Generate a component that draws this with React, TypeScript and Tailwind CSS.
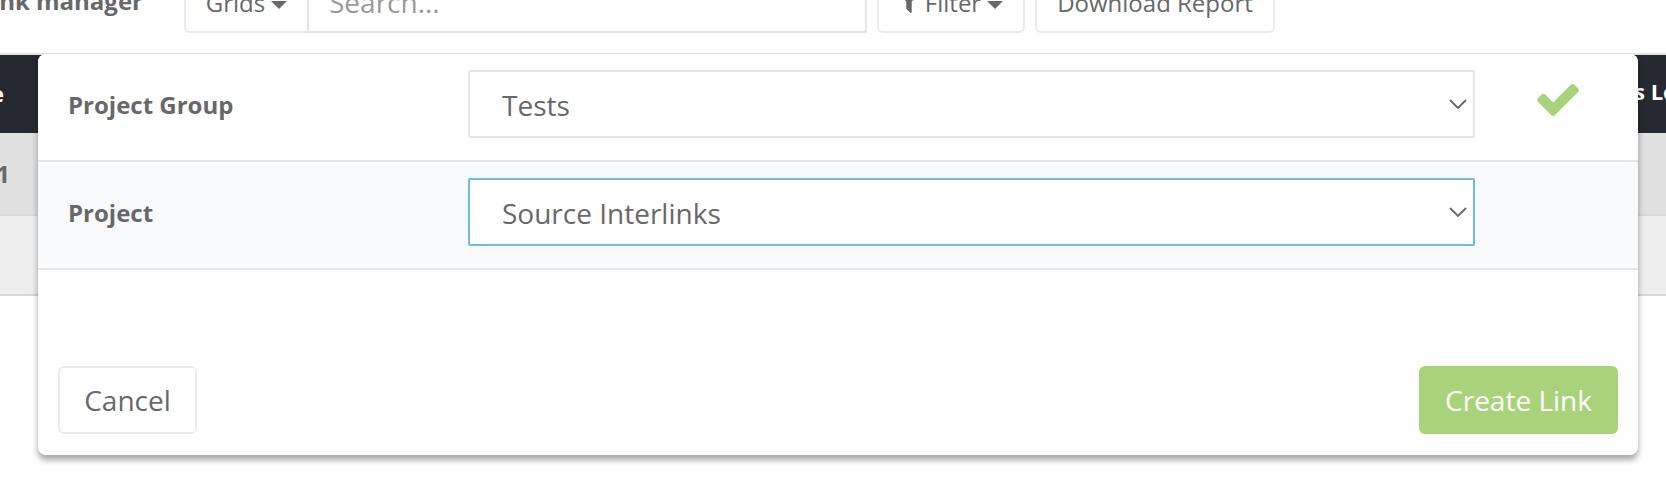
import React, { useState } from 'react';

const CheckIcon: React.FC = () => (
  <svg viewBox="121 334 1550 1188" className="h-8 w-[42px] fill-[#a9d37a]" aria-label="Valid">
    <path d="M1671 566q0 40-28 68l-724 724-136 136q-28 28-68 28t-68-28l-136-136-362-362q-28-28-28-68t28-68l136-136q28-28 68-28t68 28l294 295 656-657q28-28 68-28t68 28l136 136q28 28 28 68z" />
  </svg>
);

const Caret: React.FC = () => (
  <svg viewBox="0 0 16 8" className="mt-1 h-2 w-4 shrink-0 fill-current" aria-hidden="true">
    <path d="M0 0h16l-8 8z" />
  </svg>
);

const FilterIcon: React.FC = () => (
  <svg viewBox="187 256 1418 1408" className="h-5 w-5 shrink-0 fill-current" aria-hidden="true">
    <path d="M1595 295q17 41-14 70l-493 493v742q0 42-39 59-13 5-25 5-27 0-45-19l-256-256q-19-19-19-45v-486l-493-493q-31-29-14-70 17-39 59-39h1280q42 0 59 39z" />
  </svg>
);

interface SelectRowProps {
  id: string;
  label: string;
  options: string[];
  value: string;
  onChange: (value: string) => void;
  active?: boolean;
  valid?: boolean;
}

const SelectRow: React.FC<SelectRowProps> = ({ id, label, options, value, onChange, active, valid }) => (
  <div
    className={`grid grid-cols-[430fr_1007fr_163fr] border-b-2 border-[#e3e4e5] pt-4 pb-[22px] ${
      active ? 'bg-[#f9fafc]' : 'bg-white'
    }`}
  >
    <label htmlFor={id} className="self-center pt-0.5 pl-[30px] text-2xl font-bold">
      {label}
    </label>
    <div className="relative">
      <select
        id={id}
        value={value}
        onChange={(e) => onChange(e.target.value)}
        className={`h-[68px] w-full appearance-none rounded-xs border-2 bg-white pt-0.5 pl-8 text-[28px] outline-none ${
          active ? 'border-[#6cbde3]' : 'border-[#e5e5e5]'
        }`}
      >
        {options.map((option) => (
          <option key={option}>{option}</option>
        ))}
      </select>
      <svg
        viewBox="0 0 18 10"
        className="pointer-events-none absolute top-[29px] right-2 h-[10px] w-[18px]"
        aria-hidden="true"
      >
        <path d="M1 1l8 8 8-8" fill="none" stroke="#67686a" strokeWidth="1.8" />
      </svg>
    </div>
    <div className="flex justify-center pt-[14px] pl-[3px]">{valid && <CheckIcon />}</div>
  </div>
);

const App: React.FC = () => {
  const [group, setGroup] = useState('Tests');
  const [project, setProject] = useState('Source Interlinks');

  return (
    <div className="min-h-screen overflow-hidden bg-white font-['Open_Sans',sans-serif] text-[#67686a]">
      {/* Toolbar */}
      <header className="flex h-[55px] items-end border-b-2 border-[#e3e3e3] pb-5 text-2xl">
        <h1 className="flex h-[68px] w-[143px] shrink-0 items-center justify-end pt-1 font-bold whitespace-nowrap">
          nk manager
        </h1>
        <div className="ml-[41px] flex h-[68px]">
          <button className="flex w-[123px] items-center justify-center gap-1.5 rounded-l-md border-2 border-r-0 border-[#e8eaed] pt-2">
            Grids
            <Caret />
          </button>
          <input
            type="text"
            aria-label="Search"
            placeholder="Search..."
            className="w-[560px] border-2 border-[#e5e5e5] pt-2 pl-5 text-[28px] outline-none placeholder:text-[#999]"
          />
        </div>
        <button className="ml-[10px] flex h-[68px] w-[148px] items-center justify-center gap-1.5 rounded-md border-2 border-[#e8eaed] pt-2">
          <FilterIcon />
          Filter
          <Caret />
        </button>
        <button className="ml-[10px] h-[68px] w-60 rounded-md border-2 border-[#e8eaed] pt-2">Download Report</button>
      </header>

      <main className="relative">
        {/* Links table */}
        <table className="w-full table-fixed text-2xl font-bold">
          <thead>
            <tr className="h-[78px] bg-[#262a30] text-[22px] text-white">
              <th className="w-8 p-0">
                <div className="flex w-1 justify-end">e</div>
              </th>
              <th className="p-0" />
              <th className="w-8 overflow-hidden p-0 pb-1 text-left whitespace-nowrap">s Lo</th>
            </tr>
          </thead>
          <tbody>
            <tr className="h-[82px] border-b-2 border-[#d8d8d8] bg-[#e0e0e0]">
              <td className="p-0">
                <div className="flex w-[10px] justify-end">1</div>
              </td>
              <td className="p-0" />
              <td className="p-0" />
            </tr>
            <tr className="h-20 border-b-2 border-[#d8d8d8] bg-[#eeeeee]">
              <td className="p-0" />
              <td className="p-0" />
              <td className="p-0" />
            </tr>
          </tbody>
        </table>

        {/* Create link dialog */}
        <form
          role="dialog"
          aria-label="Create link"
          onSubmit={(e) => e.preventDefault()}
          className="absolute inset-x-0 -top-px mr-7 ml-[38px] overflow-hidden rounded-lg bg-white shadow-[0_5px_6px_rgba(0,0,0,0.35)]"
        >
          <SelectRow id="group" label="Project Group" options={['Tests']} value={group} onChange={setGroup} valid />
          <SelectRow
            id="project"
            label="Project"
            options={['Source Interlinks']}
            value={project}
            onChange={setProject}
            active
          />
          <div className="flex justify-between px-5 pt-24 pb-[21px] text-[28px]">
            <button type="button" className="h-[68px] w-[139px] rounded-md border-2 border-[#e8eaed]">
              Cancel
            </button>
            <button type="submit" className="h-[68px] w-[199px] rounded-md bg-[#a9d37a] text-white">
              Create Link
            </button>
          </div>
        </form>
      </main>
    </div>
  );
};

export default App;
